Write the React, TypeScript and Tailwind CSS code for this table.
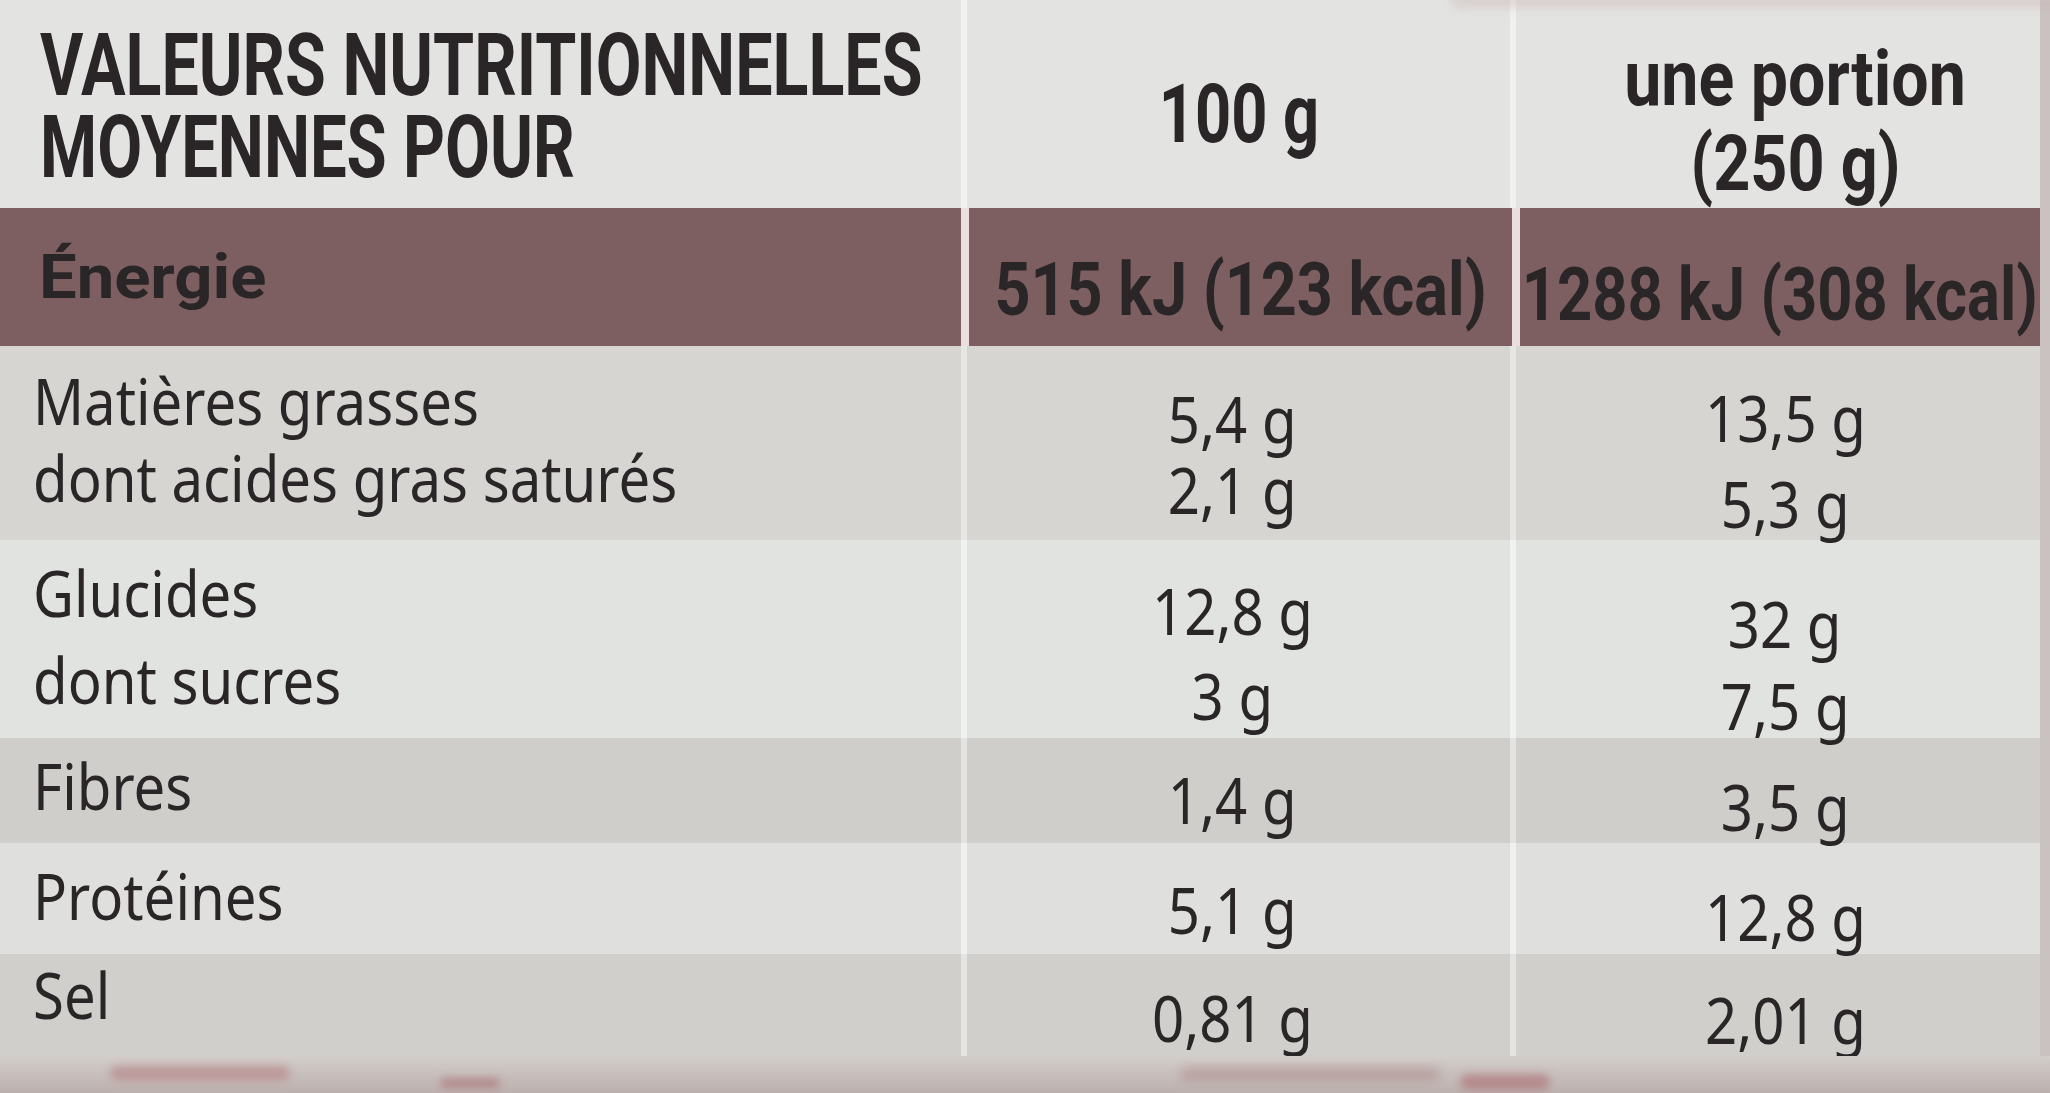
import React from "react";

type Cell = { lines: string[]; pad: string; lh: string };
type Row = {
  label: Cell;
  per100: Cell;
  portion: Cell;
  cell: string;
  line: string;
  h: string;
};

const body = "font-['Noto_Sans',sans-serif] text-[64px] text-[#2a2627] whitespace-nowrap";
const bold = "font-['Roboto',sans-serif] font-bold text-[#2a2627] whitespace-nowrap";
const cols = "grid grid-cols-[961px_543px_minmax(0,1fr)]";

const rows: Row[] = [
  {
    label: { lines: ["Matières grasses", "dont acides gras saturés"], pad: "pt-[16px]", lh: "leading-[77px]" },
    per100: { lines: ["5,4 g", "2,1 g"], pad: "pt-[37px]", lh: "leading-[71px]" },
    portion: { lines: ["13,5 g", "5,3 g"], pad: "pt-[29px]", lh: "leading-[86px]" },
    cell: "bg-[#d6d5d1]",
    line: "bg-[#e6e7e4]",
    h: "h-[194px]",
  },
  {
    label: { lines: ["Glucides", "dont sucres"], pad: "pt-[9px]", lh: "leading-[87px]" },
    per100: { lines: ["12,8 g", "3 g"], pad: "pt-[28px]", lh: "leading-[85px]" },
    portion: { lines: ["32 g", "7,5 g"], pad: "pt-[43px]", lh: "leading-[82px]" },
    cell: "bg-[#e1e3e0]",
    line: "bg-[#f1f2f0]",
    h: "h-[198px]",
  },
  {
    label: { lines: ["Fibres"], pad: "pt-[12px]", lh: "leading-[72px]" },
    per100: { lines: ["1,4 g"], pad: "pt-[26px]", lh: "leading-[72px]" },
    portion: { lines: ["3,5 g"], pad: "pt-[33px]", lh: "leading-[72px]" },
    cell: "bg-[#cfcecb]",
    line: "bg-[#e3e4e1]",
    h: "h-[105px]",
  },
  {
    label: { lines: ["Protéines"], pad: "pt-[17px]", lh: "leading-[72px]" },
    per100: { lines: ["5,1 g"], pad: "pt-[31px]", lh: "leading-[72px]" },
    portion: { lines: ["12,8 g"], pad: "pt-[38px]", lh: "leading-[72px]" },
    cell: "bg-[#dfe0de]",
    line: "bg-[#f0f1ef]",
    h: "h-[111px]",
  },
  {
    label: { lines: ["Sel"], pad: "pt-[5px]", lh: "leading-[72px]" },
    per100: { lines: ["0,81 g"], pad: "pt-[28px]", lh: "leading-[72px]" },
    portion: { lines: ["2,01 g"], pad: "pt-[30px]", lh: "leading-[72px]" },
    cell: "bg-[#d0cfcc]",
    line: "bg-[#e4e5e2]",
    h: "h-[102px]",
  },
];

function NutrientRow({ row }: { row: Row }) {
  return (
    <div className={`${cols} gap-x-[6px] ${row.line} ${row.h}`}>
      <div className={`${row.cell} ${row.label.pad} pl-[33px] ${body} ${row.label.lh}`}>
        {row.label.lines.map((l) => (
          <div key={l}>
            <span className="inline-block origin-left scale-x-[0.88]">{l}</span>
          </div>
        ))}
      </div>
      <div className={`${row.cell} ${row.per100.pad} pr-[12px] text-center ${body} ${row.per100.lh}`}>
        {row.per100.lines.map((v, i) => (
          <div key={i}>
            <span className="inline-block scale-x-[0.88]">{v}</span>
          </div>
        ))}
      </div>
      <div className={`${row.cell} ${row.portion.pad} pl-[14px] text-center ${body} ${row.portion.lh}`}>
        {row.portion.lines.map((v, i) => (
          <div key={i}>
            <span className="inline-block scale-x-[0.88]">{v}</span>
          </div>
        ))}
      </div>
    </div>
  );
}

export default function App() {
  return (
    <div className="relative w-[2050px] h-[1093px] overflow-hidden bg-[#c9c2c0] flex flex-col">
      <div className="w-[2040px] flex flex-col">
        {/* header */}
        <div className={`${cols} gap-x-[6px] h-[208px] bg-[#f1f2f0]`}>
          <div className={`bg-[#e3e4e2] pt-[24px] pl-[40px] text-[87px] leading-[82px] ${bold}`}>
            <div>
              <span className="inline-block origin-left scale-x-[0.763]">VALEURS NUTRITIONNELLES</span>
            </div>
            <div>
              <span className="inline-block origin-left scale-x-[0.75]">MOYENNES POUR</span>
            </div>
          </div>
          <div className={`bg-[#e3e4e2] pt-[70px] text-center text-[81px] leading-[90px] ${bold}`}>
            <span className="inline-block scale-x-[0.78]">100 g</span>
          </div>
          <div className={`bg-[#e3e4e2] pt-[36px] pl-[34px] text-center text-[78px] leading-[85px] ${bold}`}>
            <div>
              <span className="inline-block scale-x-[0.85]">une portion</span>
            </div>
            <div>
              <span className="inline-block scale-x-[0.83]">(250 g)</span>
            </div>
          </div>
        </div>

        {/* energy */}
        <div className={`${cols} gap-x-[8px] h-[138px] bg-[#eadede]`}>
          <div className={`bg-[#7d5f62] pl-[39px] pt-[29px] text-[62px] leading-[80px] text-[#2a1e21] ${bold}`}>
            <span className="inline-block origin-left scale-x-[1.08]">Énergie</span>
          </div>
          <div className={`bg-[#7d5f62] pt-[37px] flex justify-center text-[74px] leading-[90px] ${bold}`}>
            <span className="inline-block shrink-0 scale-x-[0.85]">515 kJ (123 kcal)</span>
          </div>
          <div className={`bg-[#7d5f62] pt-[42px] flex justify-center text-[74px] leading-[90px] ${bold}`}>
            <span className="inline-block shrink-0 scale-x-[0.83]">1288 kJ (308 kcal)</span>
          </div>
        </div>

        {rows.map((r) => (
          <NutrientRow key={r.label.lines[0]} row={r} />
        ))}
      </div>

      {/* packaging edge below the table */}
      <div className="relative flex-1 bg-gradient-to-b from-[#d3cecb] to-[#bcb0ae]">
        <div className="absolute left-[110px] top-[10px] h-[14px] w-[180px] rounded-full bg-[#b06b70] opacity-50 blur-[5px]" />
        <div className="absolute left-[440px] top-[22px] h-[10px] w-[60px] rounded-full bg-[#a35a60] opacity-50 blur-[4px]" />
        <div className="absolute left-[1180px] top-[12px] h-[12px] w-[260px] rounded-full bg-[#9c6b6d] opacity-40 blur-[6px]" />
        <div className="absolute left-[1460px] top-[18px] h-[16px] w-[90px] rounded-full bg-[#a85e64] opacity-50 blur-[4px]" />
      </div>

      {/* blurred packaging print peeking over the top edge */}
      <div className="absolute right-[-40px] top-[-8px] h-[16px] w-[640px] rounded-full bg-[#cdb9b8] opacity-50 blur-[6px]" />
    </div>
  );
}
